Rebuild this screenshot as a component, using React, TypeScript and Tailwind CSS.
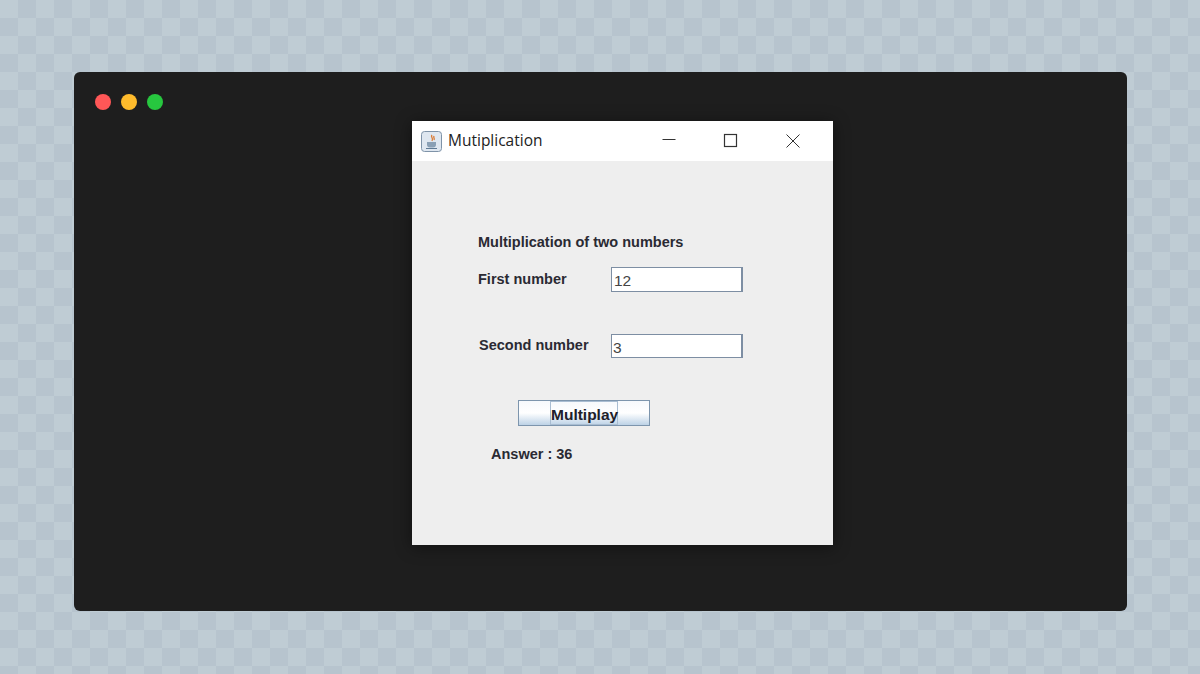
export default function App() {
  return (
    <div className="w-[1200px] h-[674px] overflow-hidden pt-[72px] pl-[74px] bg-[#bcc9d2] bg-[conic-gradient(#b7c4ce_25%,#bfccd4_0_50%,#b7c4ce_0_75%,#bfccd4_0)] bg-[length:36px_36px]">
      <div className="w-[1053px] h-[539px] rounded-[6px] bg-[#1e1e1e] pt-[22px] pl-[21px]">
        <div className="flex gap-[10px] h-[27px]">
          <div className="w-[16px] h-[16px] rounded-full bg-[#ff5757]" />
          <div className="w-[16px] h-[16px] rounded-full bg-[#febb2c]" />
          <div className="w-[16px] h-[16px] rounded-full bg-[#27c73f]" />
        </div>
        <div className="ml-[317px] w-[421px] h-[424px] bg-[#eeeeee] shadow-[0_2px_16px_rgba(0,0,0,0.45)] font-['Liberation_Sans',sans-serif]">
          <div className="h-[40px] w-[421px] bg-white flex items-center pl-[9px]">
            <svg width="21" height="21" viewBox="0 0 21 21" className="mr-[6px]">
              <rect x="0.5" y="0.5" width="20" height="20" rx="3" fill="#dfe7f0" stroke="#7f93a8" />
              <path d="M11 4c-2 2 2 3 0 6M13 5c-1 2 1 2 0 4" stroke="#d9772f" strokeWidth="1.3" fill="none" />
              <path d="M6 11h9v2.500a3 3 0 0 1-3 3h-3a3 3 0 0 1-3-3z" fill="#8aa0b5" />
              <path d="M5 17.500h11" stroke="#5f7a94" strokeWidth="1" />
            </svg>
            <span className="font-['Open_Sans',sans-serif] text-[15.500px] text-[#222222] w-[206px]">Mutiplication</span>
            <svg width="16" height="16" viewBox="0 0 16 16" className="ml-[7px] mb-[2px]" fill="none" stroke="#333333" strokeWidth="1">
              <path d="M1.500 7.500h13" />
            </svg>
            <svg width="16" height="16" viewBox="0 0 16 16" className="ml-[46px] mb-[1px]" fill="none" stroke="#333333" strokeWidth="1.200">
              <rect x="1.500" y="1.500" width="12" height="12" />
            </svg>
            <svg width="16" height="16" viewBox="0 0 16 16" className="ml-[46px] mb-[1px]" fill="none" stroke="#333333" strokeWidth="1">
              <path d="M1.500 1.500l13 13M14.500 1.500l-13 13" />
            </svg>
          </div>
          <div className="pl-[66px] pt-[71px] font-bold text-[14.500px] text-[#2a2a33]">
            <div className="h-[20px] leading-[20px] whitespace-nowrap">Multiplication of two numbers</div>
            <div className="flex items-center h-[25px] mt-[15px]">
              <span className="w-[133px]">First number</span>
              <div className="w-[132px] h-[25px] bg-white border border-[#7d8ea3] border-r-2 font-normal text-[15.500px] text-[#444444] pl-[2px] leading-[25px]">12</div>
            </div>
            <div className="flex items-center h-[24px] mt-[42px]">
              <span className="w-[133px] pl-[1px]">Second number</span>
              <div className="w-[132px] h-[24px] bg-white border border-[#7d8ea3] border-r-2 font-normal text-[15.500px] text-[#444444] pl-[1px] leading-[25px]">3</div>
            </div>
            <div className="ml-[40px] mt-[42px] w-[132px] h-[26px] border border-[#7d95ad] bg-gradient-to-b from-[#f6f9fc] via-[#ffffff] to-[#bdd2e6] flex items-center justify-center">
              <span className="border border-[#a9bdd2] h-[24px] w-[68px] text-center leading-[25px] text-[15.500px] text-[#20202a] pr-[1px]">Multiplay</span>
            </div>
            <div className="ml-[13px] mt-[18px] h-[20px] leading-[20px] text-[#2a2a33]">Answer : 36</div>
          </div>
        </div>
      </div>
    </div>
  );
}
